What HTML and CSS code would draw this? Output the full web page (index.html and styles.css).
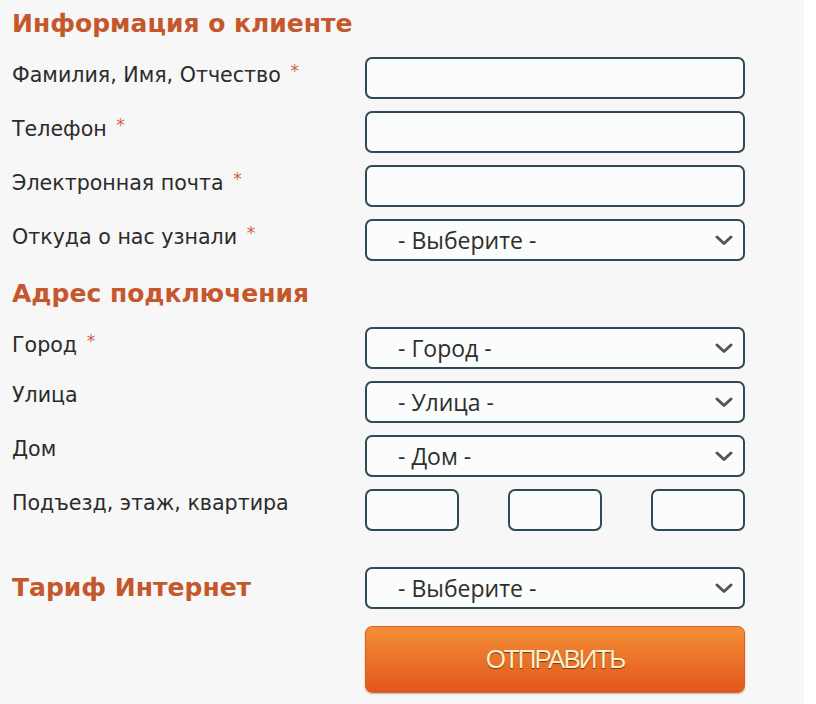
FILE: index.html
```html
<!DOCTYPE html>
<html lang="ru">
<head>
<meta charset="utf-8">
<title>Информация о клиенте</title>
<link rel="stylesheet" href="styles.css">
</head>
<body>
<div class="page">
  <form class="form">
    <div class="row row-head">
      <h2 class="heading">Информация о клиенте</h2>
    </div>
    <div class="row">
      <label class="label">Фамилия, Имя, Отчество <span class="req">*</span></label>
      <div class="field"><div class="input"></div></div>
    </div>
    <div class="row">
      <label class="label">Телефон <span class="req">*</span></label>
      <div class="field"><div class="input"></div></div>
    </div>
    <div class="row">
      <label class="label">Электронная почта <span class="req">*</span></label>
      <div class="field"><div class="input"></div></div>
    </div>
    <div class="row">
      <label class="label">Откуда о нас узнали <span class="req">*</span></label>
      <div class="field"><div class="input select"><span class="sel-text">- Выберите -</span><svg class="chev" width="18" height="11" viewBox="0 0 18 11"><polyline points="2,2 9,8.5 16,2" fill="none" stroke="#555" stroke-width="3" stroke-linecap="round" stroke-linejoin="round"/></svg></div></div>
    </div>
    <div class="row row-head">
      <h2 class="heading">Адрес подключения</h2>
    </div>
    <div class="row">
      <label class="label">Город <span class="req">*</span></label>
      <div class="field"><div class="input select"><span class="sel-text">- Город -</span><svg class="chev" width="18" height="11" viewBox="0 0 18 11"><polyline points="2,2 9,8.5 16,2" fill="none" stroke="#555" stroke-width="3" stroke-linecap="round" stroke-linejoin="round"/></svg></div></div>
    </div>
    <div class="row">
      <label class="label">Улица</label>
      <div class="field"><div class="input select"><span class="sel-text">- Улица -</span><svg class="chev" width="18" height="11" viewBox="0 0 18 11"><polyline points="2,2 9,8.5 16,2" fill="none" stroke="#555" stroke-width="3" stroke-linecap="round" stroke-linejoin="round"/></svg></div></div>
    </div>
    <div class="row">
      <label class="label">Дом</label>
      <div class="field"><div class="input select"><span class="sel-text">- Дом -</span><svg class="chev" width="18" height="11" viewBox="0 0 18 11"><polyline points="2,2 9,8.5 16,2" fill="none" stroke="#555" stroke-width="3" stroke-linecap="round" stroke-linejoin="round"/></svg></div></div>
    </div>
    <div class="row">
      <label class="label">Подъезд, этаж, квартира</label>
      <div class="field field-split">
        <div class="input small"></div>
        <div class="input small"></div>
        <div class="input small"></div>
      </div>
    </div>
    <div class="row row-tariff">
      <h2 class="heading heading-inline">Тариф Интернет</h2>
      <div class="field"><div class="input select"><span class="sel-text">- Выберите -</span><svg class="chev" width="18" height="11" viewBox="0 0 18 11"><polyline points="2,2 9,8.5 16,2" fill="none" stroke="#555" stroke-width="3" stroke-linecap="round" stroke-linejoin="round"/></svg></div></div>
    </div>
    <div class="row row-btn">
      <div class="label"></div>
      <div class="field"><button type="button" class="btn">ОТПРАВИТЬ</button></div>
    </div>
  </form>
</div>
</body>
</html>
```

FILE: styles.css
```css
html, body {
  margin: 0;
  padding: 0;
}
body {
  background: #ffffff;
  font-family: "DejaVu Sans", Verdana, sans-serif;
  color: #333333;
}
.page {
  width: 804px;
  height: 704px;
  background: #f7f7f7;
  box-sizing: border-box;
  padding: 3px 0 0 12px;
}
.form {
  display: flex;
  flex-direction: column;
  gap: 12px;
}
.row {
  display: flex;
  height: 42px;
}
.label {
  width: 353px;
  flex: none;
  font-size: 20.6px;
  line-height: 26px;
  padding-top: 1px;
  color: #2b2b2b;
}
.req {
  color: #d0624a;
  font-size: 17px;
  vertical-align: 5px;
  margin-left: 3px;
}
.heading {
  margin: 0;
  font-size: 25px;
  font-weight: bold;
  color: #c4582c;
  line-height: 42px;
}
.heading-inline {
  width: 353px;
  flex: none;
}
.field {
  width: 380px;
  flex: none;
  display: flex;
}
.field-split {
  justify-content: space-between;
}
.input {
  box-sizing: border-box;
  width: 100%;
  height: 42px;
  border: 2px solid #2f4a54;
  border-radius: 7px;
  background: #fbfcfc;
}
.input.small {
  width: 94px;
}
.select {
  display: flex;
  align-items: center;
  justify-content: space-between;
  padding: 0 10px 0 31px;
}
.sel-text {
  font-family: "Open Sans", sans-serif;
  font-size: 23px;
  color: #2e2e2e;
}
.chev {
  display: block;
}
.row-tariff {
  margin-top: 24px;
}
.row-btn {
  height: 67px;
  margin-top: 5px;
}
.btn {
  width: 380px;
  height: 67px;
  border: 1px solid #d8621f;
  border-radius: 7px;
  background: linear-gradient(#f28f36, #e4561b);
  font-family: "Liberation Sans", Arial, sans-serif;
  font-size: 26px;
  letter-spacing: -2px;
  color: #fcefcb;
  text-shadow: 0 1px 1px rgba(80, 30, 0, 0.7);
  box-shadow: 0 1px 2px rgba(0, 0, 0, 0.25);
  padding: 0;
  cursor: pointer;
}
```
